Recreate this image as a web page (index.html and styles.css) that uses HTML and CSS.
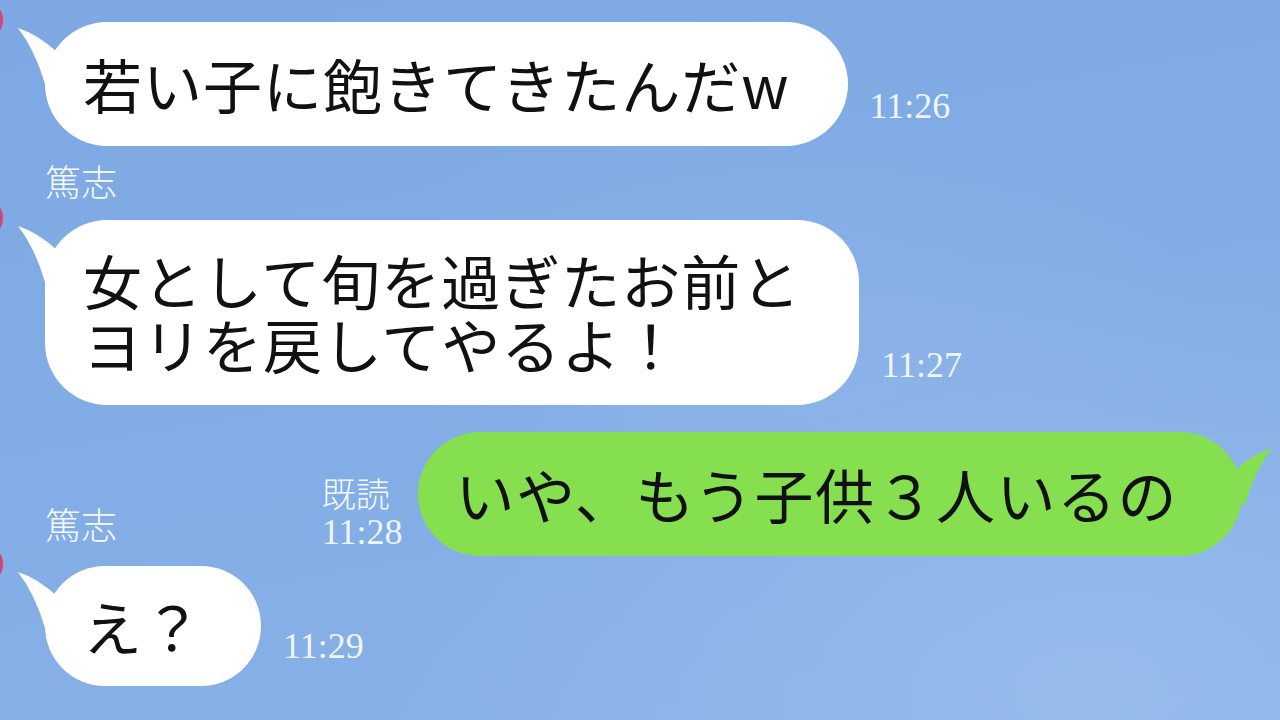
FILE: index.html
```html
<!DOCTYPE html>
<html lang="ja">
<head>
<meta charset="UTF-8">
<meta name="viewport" content="width=device-width, initial-scale=1.0">
<title>トーク</title>
<link rel="stylesheet" href="styles.css">
</head>
<body>

<div class="chat">
    <div class="row left">
        <span class="avatar"></span>
        <div class="bubble one">
            <svg class="tail" viewBox="0 0 50 70" width="50" height="70"><path d="M1 6 Q20 12 40 30 L50 50 L50 70 L28 62 Q18 28 1 6 Z"/></svg>
            若い子に飽きてきたんだw
        </div>
        <span class="time">11:26</span>
    </div>

    <div class="name first">篤志</div>

    <div class="row left">
        <span class="avatar"></span>
        <div class="bubble two">
            <svg class="tail" viewBox="0 0 50 70" width="50" height="70"><path d="M1 6 Q20 12 40 30 L50 50 L50 70 L28 62 Q18 28 1 6 Z"/></svg>
            <span class="line">女として旬を過ぎたお前と</span>
            <span class="line">ヨリを戻してやるよ！</span>
        </div>
        <span class="time">11:27</span>
    </div>

    <div class="row right">
        <div class="name">篤志</div>
        <div class="read">
            <span class="read-label">既読</span>
            <span class="time">11:28</span>
        </div>
        <div class="bubble mine">
            <svg class="tail" viewBox="0 0 50 70" width="50" height="70"><path d="M1 6 Q20 12 40 30 L50 50 L50 70 L28 62 Q18 28 1 6 Z"/></svg>
            いや、もう子供３人いるの
        </div>
    </div>

    <div class="row left last">
        <span class="avatar"></span>
        <div class="bubble four">
            <svg class="tail" viewBox="0 0 50 70" width="50" height="70"><path d="M1 6 Q20 12 40 30 L50 50 L50 70 L28 62 Q18 28 1 6 Z"/></svg>
            え？
        </div>
        <span class="time">11:29</span>
    </div>
</div>

</body>
</html>
```

FILE: styles.css
```css
html, body {
    height: 100%;
}

body {
    margin: 0;
    overflow: hidden;
    font-family: "Noto Sans CJK JP", "Noto Sans", sans-serif;
    background-color: #82ace5;
    background-image:
        radial-gradient(ellipse at 85% 95%, rgba(160, 195, 238, 0.55) 0%, rgba(160, 195, 238, 0) 45%),
        radial-gradient(ellipse at 60% 45%, rgba(150, 185, 235, 0.35) 0%, rgba(150, 185, 235, 0) 40%),
        linear-gradient(170deg, #7ea8e3 0%, #83ade6 55%, #8ab2e7 100%);
}

.chat {
    display: flex;
    flex-direction: column;
    padding: 22px 38px 0 45px;
}

.row {
    display: flex;
    align-items: flex-end;
    position: relative;
}

.avatar {
    position: absolute;
    left: -82px;
    top: -22px;
    width: 40px;
    height: 40px;
    border-radius: 50%;
    background: radial-gradient(circle at 70% 50%, #e0507e 0%, #c23a68 60%, #8c2a55 100%);
}

.bubble {
    position: relative;
    background: #fff;
    color: #111;
    font-size: 59px;
    line-height: 64px;
    letter-spacing: 1px;
    border-radius: 62px;
    padding: 30px 58px 30px 38px;
    white-space: nowrap;
}

.bubble .tail {
    position: absolute;
    left: -28px;
    top: 0;
    fill: #fff;
}

.bubble.two {
    display: flex;
    flex-direction: column;
    padding-top: 28px;
    padding-bottom: 29px;
}

.bubble.two .line {
    display: block;
    height: 64px;
}

.bubble.four {
    padding-top: 28px;
    padding-bottom: 28px;
}

.time {
    font-family: "Liberation Serif", serif;
    font-size: 36px;
    line-height: 40px;
    color: rgba(255, 255, 255, 0.9);
    margin-left: 22px;
    margin-bottom: 20px;
}

.name {
    font-size: 36px;
    line-height: 44px;
    font-weight: 300;
    color: rgba(255, 255, 255, 0.95);
}

.name.first {
    margin: 12px 0 18px;
}

.row.right {
    margin-top: 27px;
}

.row.right .name {
    margin-right: auto;
    margin-bottom: 11px;
}

.read {
    display: flex;
    flex-direction: column;
    gap: 1px;
    margin-right: 15px;
    margin-bottom: 4px;
}

.read-label {
    font-size: 34px;
    line-height: 36px;
    font-weight: 300;
    color: rgba(255, 255, 255, 0.95);
}

.read .time {
    margin: 0;
}

.bubble.mine {
    background: #86df4e;
    letter-spacing: 1.5px;
    padding-right: 64px;
}

.bubble.mine .tail {
    left: auto;
    right: -31px;
    top: 10px;
    fill: #86df4e;
    transform: scaleX(-1);
}

.row.last {
    margin-top: 10px;
}
```
